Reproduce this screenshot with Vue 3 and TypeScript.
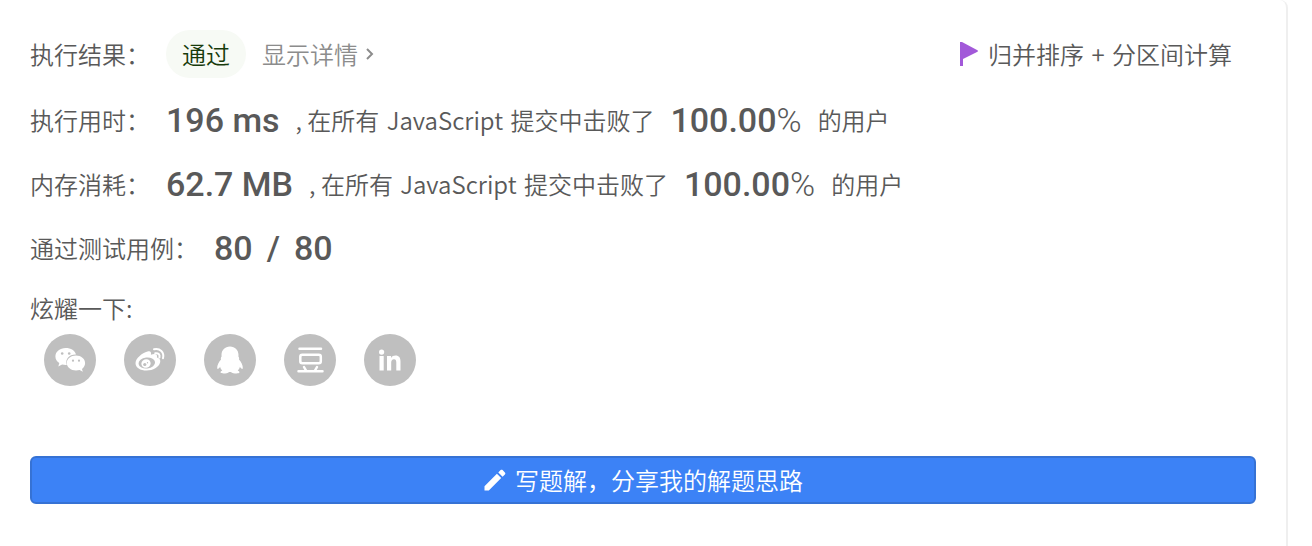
<script setup lang="ts">
interface Metric {
  label: string
  value: string
  percent: string
}

const metrics: Metric[] = [
  { label: '执行用时：', value: '196 ms', percent: '100.00' },
  { label: '内存消耗：', value: '62.7 MB', percent: '100.00' },
]
</script>

<template>
  <main class="card">
    <div class="row head">
      <span class="label">执行结果：</span>
      <span class="status">通过</span>
      <a class="details" href="#">
        显示详情
        <svg class="chevron" viewBox="0 0 12 16" aria-hidden="true">
          <path d="M3 3l5 5-5 5" fill="none" stroke="currentColor" stroke-width="2" />
        </svg>
      </a>
      <span class="note">
        <svg class="flag" viewBox="0 0 18 24" aria-hidden="true">
          <path d="M0 0h2l15 8q2 1 0 2L3 17v7H0z" fill="#a259d9" />
        </svg>
        <span>归并排序 <span class="latin">+</span> 分区间计算</span>
      </span>
    </div>

    <div v-for="m in metrics" :key="m.label" class="row">
      <span class="label">{{ m.label }}</span>
      <strong class="value">{{ m.value }}</strong>
      <span class="text">, 在所有 <span class="latin">JavaScript</span> 提交中击败了</span>
      <strong class="value">{{ m.percent }}<span class="unit">%</span></strong>
      <span class="text">的用户</span>
    </div>

    <div class="row">
      <span class="label">通过测试用例：</span>
      <strong class="value cases"><span>80</span> <span>/</span> <span>80</span></strong>
    </div>

    <div class="share-title">炫耀一下:</div>
    <div class="share">
      <button type="button" aria-label="微信">
        <svg viewBox="0 0 52 52">
          <path fill="#fff" d="M21.6 14C15.9 14 11.4 17.7 11.4 22.4c0 2.8 1.5 5.1 3.9 6.7l-1 3.3 3.8-1.9c1.6.4 3 .5 4.7.4-2-6 2.8-10.7 9.2-10.4C31.200 16.700 26.900 14 21.600 14z" />
          <path fill="#fff" d="M32 21.500c-5.100 0-9.200 3.300-9.200 7.500s4.100 7.500 9.200 7.500c1.300 0 2.500-.2 3.600-.5l3.200 1.800-.8-2.900c1.900-1.400 3.100-3.500 3.100-5.900 0-4.200-4.100-7.500-9.100-7.500z" />
          <g fill="#bfbfbf"><circle cx="18.200" cy="19.500" r="1.300" /><circle cx="25.200" cy="19.500" r="1.300" /><circle cx="29" cy="26.700" r="1.100" /><circle cx="35" cy="26.700" r="1.100" /></g>
        </svg>
      </button>
      <button type="button" aria-label="微博">
        <svg viewBox="0 0 52 52">
          <path fill="#fff" d="M23.500 17.500c2.500-1 4.200.2 3.400 3.200 3.900-1.500 7-.7 6 2.700 3 .9 3.900 2.700 3.200 5.100-1.200 4.500-7 8-13.500 8-6.200 0-11.100-2.800-11.100-7.300 0-4.700 6.500-10.200 12-11.700z" />
          <ellipse cx="22.800" cy="29" rx="8.300" ry="5.500" transform="rotate(-7 22.800 29)" fill="#bfbfbf" />
          <ellipse cx="22" cy="29.500" rx="4.700" ry="4.200" transform="rotate(-20 22 29.500)" fill="#fff" />
          <circle cx="20.800" cy="30.500" r="1.600" fill="#bfbfbf" /><circle cx="23.500" cy="28.800" r=".7" fill="#bfbfbf" />
          <path d="M30 15.300c6-1.500 10.500 3.200 9 8.900M31.200 19.300c3-.6 5 1.300 4.200 4.200" fill="none" stroke="#fff" stroke-width="2" stroke-linecap="round" />
        </svg>
      </button>
      <button type="button" aria-label="QQ">
        <svg viewBox="0 0 52 52">
          <path fill="#fff" d="M26 12.500c-5.100 0-8.500 3.500-8.500 8.600l.1 1.500c-.9 1-.9 1.900-.6 2.800-2.300 2.700-4 6-3.800 8.600.1 1.800 1.600 1 2.900-1.200.4 1.700 1.200 2.800 2.200 3.700-1.400.6-2 1.300-1.700 2.100.6 1.400 6.500 1.200 8.500-.7h1.800c2 1.900 7.900 2.100 8.500.7.300-.8-.3-1.500-1.700-2.100 1-.9 1.800-2 2.200-3.700 1.300 2.200 2.800 3 2.900 1.200.2-2.600-1.500-5.900-3.800-8.600.3-.9.300-1.800-.6-2.800l.1-1.500c0-5.100-3.400-8.600-8.500-8.600z" />
        </svg>
      </button>
      <button type="button" aria-label="豆瓣">
        <svg viewBox="0 0 52 52" fill="none" stroke="#fff" stroke-width="2.500" stroke-linecap="round">
          <path d="M15.500 14.700h21.500M14.500 37.300h24M20 33l2 3.500M33 33l-2 3.500" />
          <rect x="16.300" y="20.800" width="20.500" height="8.500" rx="2" />
        </svg>
      </button>
      <button type="button" aria-label="LinkedIn">
        <svg viewBox="0 0 52 52" fill="#fff">
          <circle cx="17.600" cy="18.100" r="2.600" />
          <path d="M15.500 22h4.200v14.500h-4.200zM23 22h4v2c1-1.600 2.500-2.400 4.500-2.400 3.500 0 5 2.200 5 5.900v9h-4.200V28.500c0-2.100-.6-3.300-2.300-3.300-1.900 0-2.800 1.300-2.800 3.500v7.800H23z" />
        </svg>
      </button>
    </div>

    <button type="button" class="write">
      <svg class="pencil" viewBox="0 0 24 24" aria-hidden="true">
        <path fill="#fff" d="M1.500 18.200V22.500h4.300L18.200 10.100l-4.300-4.300zM21.900 6.400c.6-.6.6-1.400 0-2l-2.300-2.300c-.6-.6-1.400-.6-2 0l-2.300 2.300 4.300 4.300z" />
      </svg>
      写题解，分享我的解题思路
    </button>
  </main>
</template>

<style>
body {
  margin: 0;
  background: #fff;
}
</style>

<style scoped>
.card {
  box-sizing: border-box;
  min-height: 100vh;
  margin-right: 24px;
  padding: 22px 30px 42px;
  border-right: 2px solid #efefef;
  border-radius: 8px 8px 0 0;
  background: #fff;
  color: #595959;
  font-family: "Noto Sans CJK SC DemiLight", "Noto Sans CJK SC", sans-serif;
  font-size: 24px;
  font-weight: 350;
  line-height: 32px;
}
.row {
  display: flex;
  align-items: center;
  gap: 16px;
  height: 64px;
  white-space: nowrap;
}
.head {
  margin-bottom: 2px;
}
.status {
  padding: 8px 16px;
  border-radius: 24px;
  background: #f7faf5;
  color: #173b0b;
}
.details {
  display: flex;
  align-items: center;
  gap: 6px;
  color: #8c8c8c;
  text-decoration: none;
}
.chevron {
  width: 12px;
  height: 16px;
}
.note {
  display: flex;
  align-items: center;
  gap: 10px;
  margin-left: auto;
  padding-right: 24px;
}
.flag {
  width: 18px;
  height: 24px;
}
.latin {
  margin: 0 2px;
}
.value {
  font-family: Roboto, "Noto Sans CJK SC", sans-serif;
  font-size: 34px;
  font-weight: 500;
}
.unit {
  font-weight: 300;
}
.cases {
  display: flex;
  gap: 14px;
}
.share-title {
  padding-top: 12px;
}
.share {
  display: flex;
  gap: 28px;
  padding: 10px 14px 0;
}
.share button {
  width: 52px;
  height: 52px;
  padding: 0;
  border: 0;
  border-radius: 50%;
  background: #bfbfbf;
}
.share svg {
  display: block;
}
.write {
  display: flex;
  align-items: center;
  justify-content: center;
  gap: 8px;
  box-sizing: border-box;
  width: 100%;
  height: 48px;
  margin-top: 70px;
  border: 2px solid #3672d4;
  border-radius: 6px;
  background: #3c82f6;
  color: #fff;
  font: inherit;
}
.pencil {
  width: 24px;
  height: 24px;
}
</style>
